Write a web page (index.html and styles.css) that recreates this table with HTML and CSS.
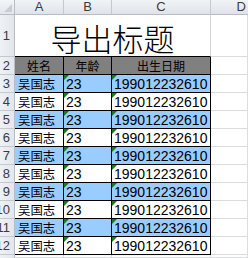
FILE: index.html
```html
<!DOCTYPE html>
<html>
<head>
<meta charset="utf-8">
<link rel="stylesheet" href="styles.css">
</head>
<body>
<div class="sheet">
  <div class="corner"><span class="tri"></span></div>
  <div class="colh">A</div>
  <div class="colh">B</div>
  <div class="colh">C</div>
  <div class="colh colh-d">D</div>

  <div class="rowh"><span>1</span></div>
  <div class="title">导出标题</div>
  <div class="cell"></div>

  <div class="rowh"><span>2</span></div>
  <div class="td hd">姓名</div>
  <div class="td hd">年龄</div>
  <div class="td hd">出生日期</div>
  <div class="cell"></div>

  <div class="rowh"><span>3</span></div>
  <div class="td blue cn">吴国志</div>
  <div class="td blue num"><i class="flag"></i>23</div>
  <div class="td blue num"><i class="flag"></i>199012232610</div>
  <div class="cell"></div>

  <div class="rowh"><span>4</span></div>
  <div class="td cn">吴国志</div>
  <div class="td num"><i class="flag"></i>23</div>
  <div class="td num"><i class="flag"></i>199012232610</div>
  <div class="cell"></div>

  <div class="rowh"><span>5</span></div>
  <div class="td blue cn">吴国志</div>
  <div class="td blue num"><i class="flag"></i>23</div>
  <div class="td blue num"><i class="flag"></i>199012232610</div>
  <div class="cell"></div>

  <div class="rowh"><span>6</span></div>
  <div class="td cn">吴国志</div>
  <div class="td num"><i class="flag"></i>23</div>
  <div class="td num"><i class="flag"></i>199012232610</div>
  <div class="cell"></div>

  <div class="rowh"><span>7</span></div>
  <div class="td blue cn">吴国志</div>
  <div class="td blue num"><i class="flag"></i>23</div>
  <div class="td blue num"><i class="flag"></i>199012232610</div>
  <div class="cell"></div>

  <div class="rowh"><span>8</span></div>
  <div class="td cn">吴国志</div>
  <div class="td num"><i class="flag"></i>23</div>
  <div class="td num"><i class="flag"></i>199012232610</div>
  <div class="cell"></div>

  <div class="rowh"><span>9</span></div>
  <div class="td blue cn">吴国志</div>
  <div class="td blue num"><i class="flag"></i>23</div>
  <div class="td blue num"><i class="flag"></i>199012232610</div>
  <div class="cell"></div>

  <div class="rowh"><span>10</span></div>
  <div class="td cn">吴国志</div>
  <div class="td num"><i class="flag"></i>23</div>
  <div class="td num"><i class="flag"></i>199012232610</div>
  <div class="cell"></div>

  <div class="rowh"><span>11</span></div>
  <div class="td blue cn">吴国志</div>
  <div class="td blue num"><i class="flag"></i>23</div>
  <div class="td blue num"><i class="flag"></i>199012232610</div>
  <div class="cell"></div>

  <div class="rowh"><span>12</span></div>
  <div class="td cn">吴国志</div>
  <div class="td num"><i class="flag"></i>23</div>
  <div class="td num"><i class="flag"></i>199012232610</div>
  <div class="cell"></div>

  <div class="rowh rowh-last"></div>
  <div class="cell"></div>
  <div class="cell"></div>
  <div class="cell"></div>
  <div class="cell"></div>
</div>
</body>
</html>
```

FILE: styles.css
```css
* { box-sizing: border-box; margin: 0; padding: 0; }
html, body { width: 248px; height: 258px; overflow: hidden; background: #fff; }
body { font-family: "Liberation Sans", Arial, sans-serif; }

.sheet {
  display: grid;
  grid-template-columns: 15px 49px 48px 99px 37px;
  grid-template-rows: 15px 42px repeat(11, 18px) 3px;
  width: 248px;
  height: 258px;
  overflow: hidden;
}

.corner {
  position: relative;
  background: linear-gradient(#f3f5f8, #e2e6ec);
  border-right: 1px solid #b6bdc7;
  border-bottom: 1px solid #b6bdc7;
}
.tri {
  position: absolute;
  right: 2px;
  bottom: 2px;
  width: 0;
  height: 0;
  border-left: 8px solid transparent;
  border-bottom: 8px solid #c9cdd2;
}

.colh {
  background: linear-gradient(#f1f3f6, #dfe3e9);
  border-right: 1px solid #c3c9d1;
  border-bottom: 1px solid #b6bdc7;
  color: #3b3b3b;
  font-size: 13px;
  line-height: 14px;
  text-align: center;
}
.colh-d { text-align: right; padding-right: 2px; border-right: none; }

.rowh {
  display: flex;
  justify-content: flex-end;
  align-items: center;
  overflow: hidden;
  white-space: nowrap;
  background: linear-gradient(90deg, #eef1f5, #e3e7ec);
  border-right: 1px solid #b6bdc7;
  border-bottom: 1px solid #c3c9d1;
  color: #3b3b3b;
  font-size: 13px;
  line-height: 15px;
  padding-right: 4px;
}
.rowh-last { border-bottom: none; }

.title {
  grid-column: 2 / span 3;
  display: flex;
  align-items: center;
  justify-content: center;
  font-family: "Noto Sans CJK SC", sans-serif;
  font-size: 31px;
  line-height: 34px;
  font-weight: 300;
  color: #000;
  border-right: 1px solid #d4d4d4;
  border-bottom: 1px solid #000;
  padding-top: 4px;
}

.cell {
  border-right: 1px solid #dadcdd;
  border-bottom: 1px solid #dadcdd;
}

.td {
  position: relative;
  display: flex;
  align-items: center;
  border-right: 1px solid #000;
  border-bottom: 1px solid #000;
  background: #fff;
  color: #000;
  white-space: nowrap;
  overflow: hidden;
  line-height: 16px;
}
.hd {
  justify-content: center;
  background: #808080;
  font-family: "Noto Sans CJK SC", sans-serif;
  font-size: 12px;
}
.cn {
  font-family: "Noto Sans CJK SC", sans-serif;
  font-size: 12.4px;
  padding-left: 3px;
}
.num {
  font-size: 14px;
  padding-left: 2px;
}
.blue { background: #99ccff; }

.flag {
  position: absolute;
  left: 0;
  top: 0;
  width: 0;
  height: 0;
  border-top: 5px solid #1a7a1a;
  border-right: 5px solid transparent;
}
```
